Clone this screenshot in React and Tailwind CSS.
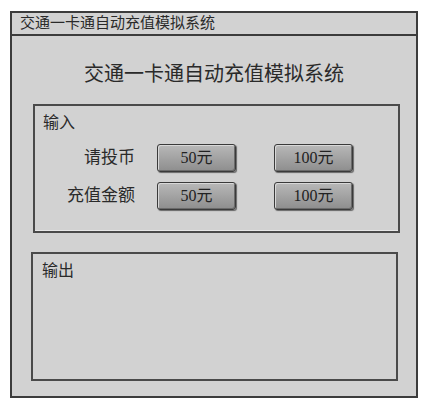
export default function App() {
  const font = { fontFamily: '"Liberation Serif", "Noto Sans CJK SC", serif' }

  const Btn = ({ children }) => (
    <button
      type="button"
      className="w-[79px] h-[28px] rounded-[3px] border border-[#3a3a3a] bg-gradient-to-b from-[#b8b8b8] to-[#8e8e8e] text-[16px] text-[#222] shadow-[inset_1px_1px_0_#d8d8d8,inset_-1px_-1px_0_#6a6a6a,1px_1px_1px_#666]"
    >
      {children}
    </button>
  )

  return (
    <div className="w-[428px] h-[407px] bg-white pt-[11px] pl-[10px]" style={font}>
      <div className="w-[408px] h-[387px] border-2 border-[#3c3c3c] bg-[#d2d2d2] flex flex-col">
        <div className="h-[23px] border-b-2 border-[#3c3c3c] flex items-center pl-[8px] text-[15px] text-[#2a2a2a] leading-none">
          交通一卡通自动充值模拟系统
        </div>

        <div className="mt-[24px] text-center text-[20px] leading-[28px] text-[#2a2a2a]">
          交通一卡通自动充值模拟系统
        </div>

        <div className="mt-[16px] ml-[21px] w-[367px] h-[129px] border-2 border-[#4a4a4a] shadow-[inset_0_-1px_0_#e8e8e8] flex flex-col">
          <div className="pl-[8px] pt-[7px] text-[16px] leading-[20px] text-[#2a2a2a]">输入</div>
          <div className="mt-[11px] grid grid-cols-[100px_79px_79px] gap-x-[38px] gap-y-[10px] items-center">
            <span className="text-right text-[17px] text-[#2a2a2a]">请投币</span>
            <div className="ml-[-16px]"><Btn>50元</Btn></div>
            <div className="ml-[-16px]"><Btn>100元</Btn></div>
            <span className="text-right text-[17px] text-[#2a2a2a]">充值金额</span>
            <div className="ml-[-16px]"><Btn>50元</Btn></div>
            <div className="ml-[-16px]"><Btn>100元</Btn></div>
          </div>
        </div>

        <div className="mt-[19px] ml-[19px] w-[367px] h-[129px] border-2 border-[#4a4a4a]">
          <div className="pl-[9px] pt-[7px] text-[16px] leading-[20px] text-[#2a2a2a]">输出</div>
        </div>
      </div>
    </div>
  )
}
